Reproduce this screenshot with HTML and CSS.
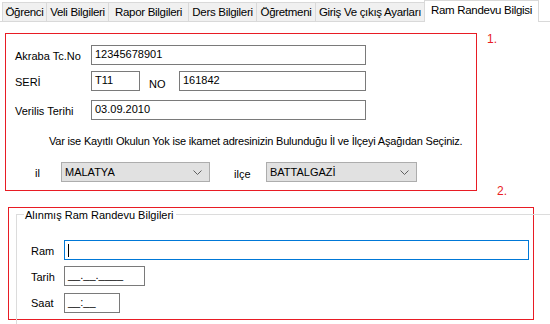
FILE: index.html
```html
<!DOCTYPE html>
<html lang="tr">
<head>
  <meta charset="UTF-8" />
  <title>Ram Randevu Bilgisi</title>
  <link rel="stylesheet" href="styles.css">
</head>
<body>

<nav class="tabs">
  <span class="tab t1">Öğrenci</span>
  <span class="tab t2">Veli Bilgileri</span>
  <span class="tab t3">Rapor Bilgileri</span>
  <span class="tab t4">Ders Bilgileri</span>
  <span class="tab t5">Öğretmeni</span>
  <span class="tab t6">Giriş Ve çıkış Ayarları</span>
  <span class="tab t7 active">Ram Randevu Bilgisi</span>
</nav>

<div class="page">
  <div class="top-row">
    <div class="panel">
      <div class="row r1">
        <label class="lbl w-lbl">Akraba Tc.No</label>
        <div class="box wide">12345678901</div>
      </div>
      <div class="row r2">
        <label class="lbl w-lbl">SERİ</label>
        <div class="box small">T11</div>
        <label class="lbl no-lbl">NO</label>
        <div class="box mid">161842</div>
      </div>
      <div class="row r3">
        <label class="lbl w-lbl">Verilis Terihi</label>
        <div class="box wide">03.09.2010</div>
      </div>
      <p class="hint">Var ise Kayıtlı Okulun Yok ise ikamet adresinizin Bulunduğu İl ve İlçeyi Aşağıdan Seçiniz.</p>
      <div class="row r4">
        <label class="lbl il-lbl">il</label>
        <div class="combo">
          <span>MALATYA</span>
          <svg width="9" height="5" viewBox="0 0 9 5"><path d="M0.5 0.5 L4.5 4.5 L8.5 0.5" fill="none" stroke="#606060" stroke-width="1"/></svg>
        </div>
        <label class="lbl ilce-lbl">ilçe</label>
        <div class="combo combo-wide">
          <span>BATTALGAZİ</span>
          <svg width="9" height="5" viewBox="0 0 9 5"><path d="M0.5 0.5 L4.5 4.5 L8.5 0.5" fill="none" stroke="#606060" stroke-width="1"/></svg>
        </div>
      </div>
    </div>
    <div class="marks">
      <span class="mark">1.</span>
      <span class="mark mark-2">2.</span>
    </div>
  </div>

  <div class="redbox">
    <div class="group">
      <span class="legend">Alınmış Ram Randevu Bilgileri</span>
      <div class="grow first">
        <label class="lbl g-lbl">Ram</label>
        <div class="box focus"><span class="caret"></span></div>
      </div>
      <div class="grow">
        <label class="lbl g-lbl">Tarih</label>
        <div class="box date">__.__.____</div>
      </div>
      <div class="grow">
        <label class="lbl g-lbl">Saat</label>
        <div class="box time">__:__</div>
      </div>
    </div>
  </div>
</div>

</body>
</html>
```

FILE: styles.css
```css
* {
  box-sizing: border-box;
}

body {
  margin: 0;
  width: 550px;
  height: 324px;
  overflow: hidden;
  background: white;
  font-family: 'Liberation Sans', Arial, sans-serif;
  font-size: 11px;
  color: #000;
}

/* tab strip */
.tabs {
  display: flex;
  align-items: flex-end;
  height: 22px;
  padding-left: 2px;
  border-bottom: 1px solid #d9d9d9;
  background: white;
}

.tab {
  height: 19px;
  margin-right: -1px;
  border: 1px solid #d9d9d9;
  border-bottom: none;
  background: #f0f0f0;
  font-size: 11.5px;
  letter-spacing: -0.3px;
  line-height: 18px;
  text-align: center;
  white-space: nowrap;
}

.tab.active {
  height: 22px;
  margin-bottom: -1px;
  background: white;
  line-height: 19px;
}

.t1 { width: 45px; }
.t2 { width: 63px; }
.t3 { width: 81px; }
.t4 { width: 69px; }
.t5 { width: 60px; }
.t6 { width: 110px; }
.t7 { width: 115px; }

/* first panel */
.top-row {
  display: flex;
  align-items: flex-start;
  height: 158px;
  margin: 11px 0 0 5px;
}

.panel {
  width: 472px;
  height: 158px;
  border: 1px solid #e81c24;
  padding: 11px 0 0 9px;
}

.row {
  display: flex;
  align-items: center;
  height: 20px;
}

.r2 { margin-top: 6px; }
.r3 { margin-top: 9px; }

.lbl {
  padding-top: 2px;
  white-space: nowrap;
}

.w-lbl { width: 76px; }
.no-lbl { width: 39px; padding-left: 9px; padding-top: 5px; }

.box {
  height: 20px;
  border: 1px solid #7a7a7a;
  background: white;
  padding: 0 3px;
  line-height: 17px;
  white-space: nowrap;
}

.wide { width: 275px; }
.small { width: 49px; }
.mid { width: 187px; }

.hint {
  margin: 15px 0 0 34px;
  height: 13px;
  line-height: 13px;
  letter-spacing: -0.2px;
  white-space: nowrap;
}

.r4 {
  margin-top: 14px;
}

.il-lbl { width: 46px; padding-left: 20px; }
.ilce-lbl { width: 56px; padding-left: 24px; padding-top: 4px; }

.combo {
  display: flex;
  align-items: center;
  justify-content: space-between;
  width: 149px;
  height: 20px;
  border: 1px solid #adadad;
  background: #e1e1e1;
  padding: 0 7px 0 3px;
}

.combo svg {
  display: block;
}

.combo-wide { width: 151px; }

/* annotation numbers */
.marks {
  display: flex;
  flex-direction: column;
  justify-content: space-between;
  height: 164px;
  padding: 0 0 0 10px;
}

.mark {
  color: #e81c24;
  font-size: 12px;
  line-height: 12px;
}

.mark-2 { padding-left: 10px; }

/* group box inside annotation frame */
.redbox {
  margin: 16px 0 0 8px;
  width: 526px;
  height: 113px;
  border: 1px solid #e81c24;
}

.group {
  position: relative;
  margin: 6px -17px 0 7px;
  height: 120px;
  border-top: 1px solid #dcdcdc;
  border-left: 1px solid #dcdcdc;
  padding: 0 0 0 14px;
}

.legend {
  position: absolute;
  top: -6px;
  left: 7px;
  padding: 0 2px 0 1px;
  background: white;
  line-height: 13px;
}

.grow {
  display: flex;
  align-items: center;
  height: 20px;
  margin-top: 6px;
}

.grow.first { margin-top: 25px; }

.g-lbl { width: 33px; }

.focus {
  width: 465px;
  border-color: #0078d7;
  padding-left: 3px;
  display: flex;
  align-items: center;
}

.caret {
  display: block;
  width: 1px;
  height: 13px;
  background: #000;
}

.date { width: 81px; }
.time { width: 56px; margin-top: 1px; }
```
